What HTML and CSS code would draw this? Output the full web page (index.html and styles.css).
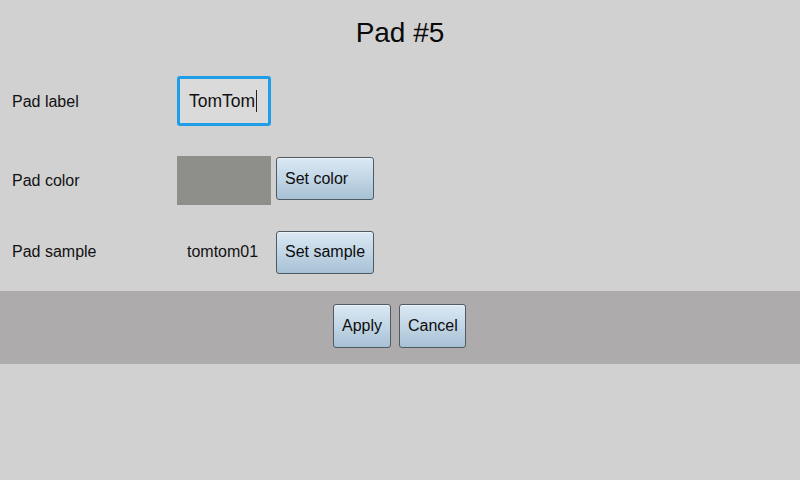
FILE: index.html
```html
<!DOCTYPE html>
<html>
<head>
<meta charset="utf-8">
<link rel="stylesheet" href="styles.css">
</head>
<body>
<div class="page">
  <header class="title">Pad #5</header>
  <div class="form">
    <div class="row row-label">
      <div class="label">Pad label</div>
      <div class="field"><span class="field-text">TomTom</span><span class="caret"></span></div>
    </div>
    <div class="row row-color">
      <div class="label">Pad color</div>
      <div class="swatch"></div>
      <button class="btn btn-wide">Set color</button>
    </div>
    <div class="row row-sample">
      <div class="label">Pad sample</div>
      <div class="sample-name">tomtom01</div>
      <button class="btn btn-wide">Set sample</button>
    </div>
  </div>
  <footer class="actions">
    <button class="btn btn-apply">Apply</button>
    <button class="btn btn-cancel">Cancel</button>
  </footer>
</div>
</body>
</html>
```
FILE: styles.css
```css
html, body {
  margin: 0;
  padding: 0;
}
body {
  background: #d1d1d1;
  font-family: "Liberation Sans", Arial, sans-serif;
  color: #111;
  width: 800px;
  height: 480px;
  overflow: hidden;
}
.page {
  display: flex;
  flex-direction: column;
}
.title {
  height: 76px;
  box-sizing: border-box;
  padding-top: 14px;
  font-size: 28px;
  line-height: 38px;
  text-align: center;
  color: #0a0a0a;
}
.form {
  display: flex;
  flex-direction: column;
  padding-left: 12px;
}
.row {
  display: flex;
  align-items: center;
}
.label {
  width: 165px;
  font-size: 16px;
  line-height: 20px;
}
.row-label {
  height: 50px;
}
.row-label .label {
  padding-top: 2px;
}
.field {
  width: 94px;
  height: 50px;
  box-sizing: border-box;
  border: 3px solid #1e9ee6;
  border-radius: 3px;
  background: #dadada;
  padding-left: 9px;
  display: flex;
  align-items: center;
  font-size: 17.5px;
}
.caret {
  width: 1px;
  height: 22px;
  background: #222;
  margin-left: 1px;
}
.row-color {
  margin-top: 30px;
  height: 49px;
  align-items: flex-start;
}
.row-color .label {
  align-self: center;
}
.swatch {
  width: 94px;
  height: 49px;
  background: #8e8f8a;
}
.row-color .btn {
  margin-top: 1px;
}
.row-sample {
  margin-top: 26px;
  height: 42px;
}
.sample-name {
  width: 99px;
  box-sizing: border-box;
  padding-left: 10px;
  font-size: 16px;
}
.btn {
  font-family: "Liberation Sans", Arial, sans-serif;
  font-size: 16px;
  color: #0d0d0d;
  background: linear-gradient(to bottom, #dae8f3 0%, #c2d6e6 50%, #a7c1d4 100%);
  border: 1px solid #505a63;
  border-radius: 3px;
  padding: 0 0 0 8px;
  margin: 0;
  text-align: left;
  white-space: nowrap;
  box-shadow: inset 0 1px 0 rgba(255,255,255,0.5);
}
.btn-wide {
  width: 98px;
  height: 43px;
  margin-left: 5px;
}
.row-sample .btn-wide {
  margin-left: 0;
  height: 43px;
}
.actions {
  margin-top: 18px;
  height: 73px;
  background: #aeabac;
  display: flex;
  justify-content: center;
  align-items: flex-start;
  box-sizing: border-box;
  padding-top: 13px;
  padding-right: 1px;
  gap: 8px;
}
.btn-apply {
  width: 58px;
  height: 44px;
}
.btn-cancel {
  width: 67px;
  height: 44px;
}
```
